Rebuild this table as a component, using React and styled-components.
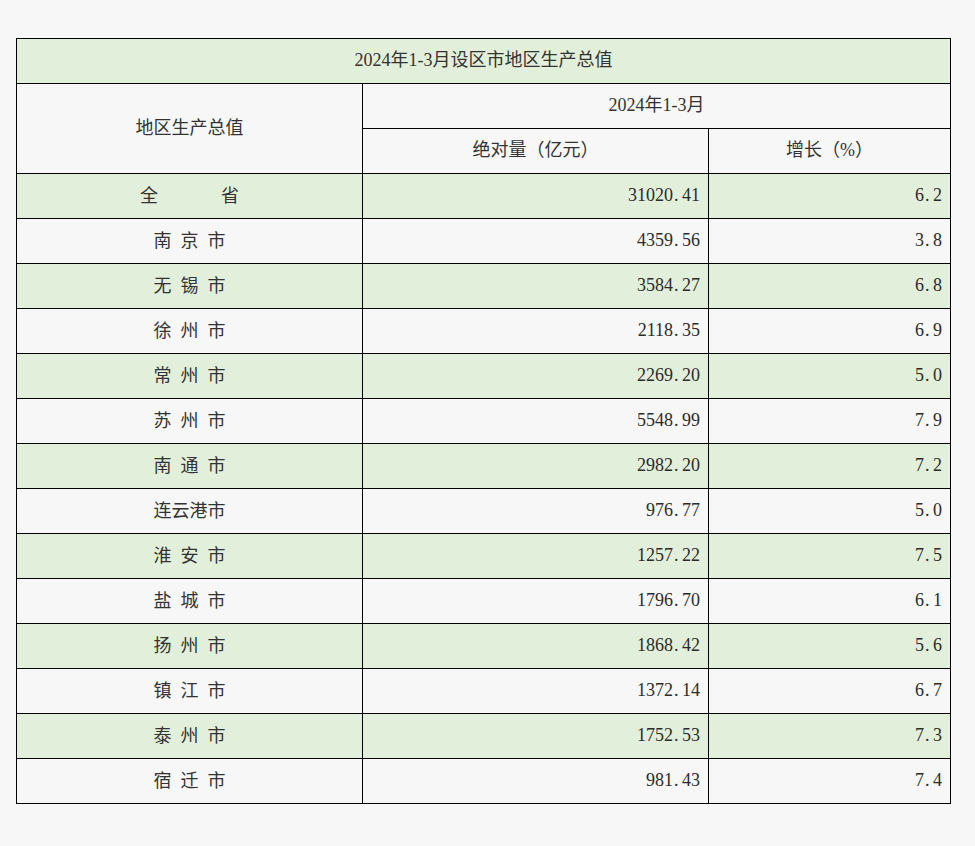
import React from "react";
import styled, { createGlobalStyle } from "styled-components";

const GlobalStyle = createGlobalStyle`
  html, body {
    margin: 0;
    padding: 0;
    background: #f7f7f7;
  }
  body {
    font-family: "Liberation Serif", "Noto Sans CJK SC", serif;
    color: #2b2b2b;
  }
`;

const Page = styled.div`
  padding: 38px 0 42px 16px;
`;

const Table = styled.table`
  width: 934px;
  border-collapse: collapse;
  table-layout: fixed;
  font-family: "Liberation Serif", "Noto Sans CJK SC", serif;
  font-size: 18px;
  color: #2b2b2b;
`;

const Row = styled.tr`
  height: 45px;
  background: ${(p) => (p.$green ? "#e2efda" : "#f7f7f7")};
`;

const Cell = styled.td`
  border: 1px solid #000;
  padding: 0 ${(p) => (p.$align === "right" ? "8px" : "0")} 2px;
  text-align: ${(p) => p.$align || "center"};
  vertical-align: middle;
  line-height: 20px;
  white-space: nowrap;
`;

const Name = styled.span`
  display: inline-flex;
  gap: ${(p) => p.$gap}px;
  font-family: "Noto Sans CJK SC", sans-serif;
  font-size: 18px;
  color: #333;
`;

const Cjk = styled.span`
  font-family: "Liberation Serif", "Noto Sans CJK SC", serif;
  color: #333;
`;

const Num = styled.span`
  font-family: "Liberation Serif", serif;
  color: #2b2b2b;
`;

const Dot = styled.span`
  display: inline-block;
  width: 9px;
  text-align: left;
  padding-left: 1px;
  box-sizing: border-box;
`;

function Value({ text }) {
  const [a, b] = text.split(".");
  return (
    <Num>
      {a}
      <Dot>.</Dot>
      {b}
    </Num>
  );
}

const rows = [
  { name: "全省", gap: 63, value: "31020.41", growth: "6.2" },
  { name: "南京市", gap: 9, value: "4359.56", growth: "3.8" },
  { name: "无锡市", gap: 9, value: "3584.27", growth: "6.8" },
  { name: "徐州市", gap: 9, value: "2118.35", growth: "6.9" },
  { name: "常州市", gap: 9, value: "2269.20", growth: "5.0" },
  { name: "苏州市", gap: 9, value: "5548.99", growth: "7.9" },
  { name: "南通市", gap: 9, value: "2982.20", growth: "7.2" },
  { name: "连云港市", gap: 0, value: "976.77", growth: "5.0" },
  { name: "淮安市", gap: 9, value: "1257.22", growth: "7.5" },
  { name: "盐城市", gap: 9, value: "1796.70", growth: "6.1" },
  { name: "扬州市", gap: 9, value: "1868.42", growth: "5.6" },
  { name: "镇江市", gap: 9, value: "1372.14", growth: "6.7" },
  { name: "泰州市", gap: 9, value: "1752.53", growth: "7.3" },
  { name: "宿迁市", gap: 9, value: "981.43", growth: "7.4" },
];

export default function App() {
  return (
    <>
      <GlobalStyle />
      <Page>
        <Table>
          <colgroup>
            <col style={{ width: 346 }} />
            <col style={{ width: 346 }} />
            <col style={{ width: 242 }} />
          </colgroup>
          <tbody>
            <Row $green>
              <Cell colSpan={3}>
                <Cjk>2024年1-3月设区市地区生产总值</Cjk>
              </Cell>
            </Row>
            <Row>
              <Cell rowSpan={2}>
                <Cjk>地区生产总值</Cjk>
              </Cell>
              <Cell colSpan={2}>
                <Cjk>2024年1-3月</Cjk>
              </Cell>
            </Row>
            <Row>
              <Cell>
                <Cjk>绝对量（亿元）</Cjk>
              </Cell>
              <Cell>
                <Cjk>增长（%）</Cjk>
              </Cell>
            </Row>
            {rows.map((r, i) => (
              <Row key={r.name} $green={i % 2 === 0}>
                <Cell>
                  <Name $gap={r.gap}>
                    {r.name.split("").map((c, j) => (
                      <span key={j}>{c}</span>
                    ))}
                  </Name>
                </Cell>
                <Cell $align="right">
                  <Value text={r.value} />
                </Cell>
                <Cell $align="right">
                  <Value text={r.growth} />
                </Cell>
              </Row>
            ))}
          </tbody>
        </Table>
      </Page>
    </>
  );
}
